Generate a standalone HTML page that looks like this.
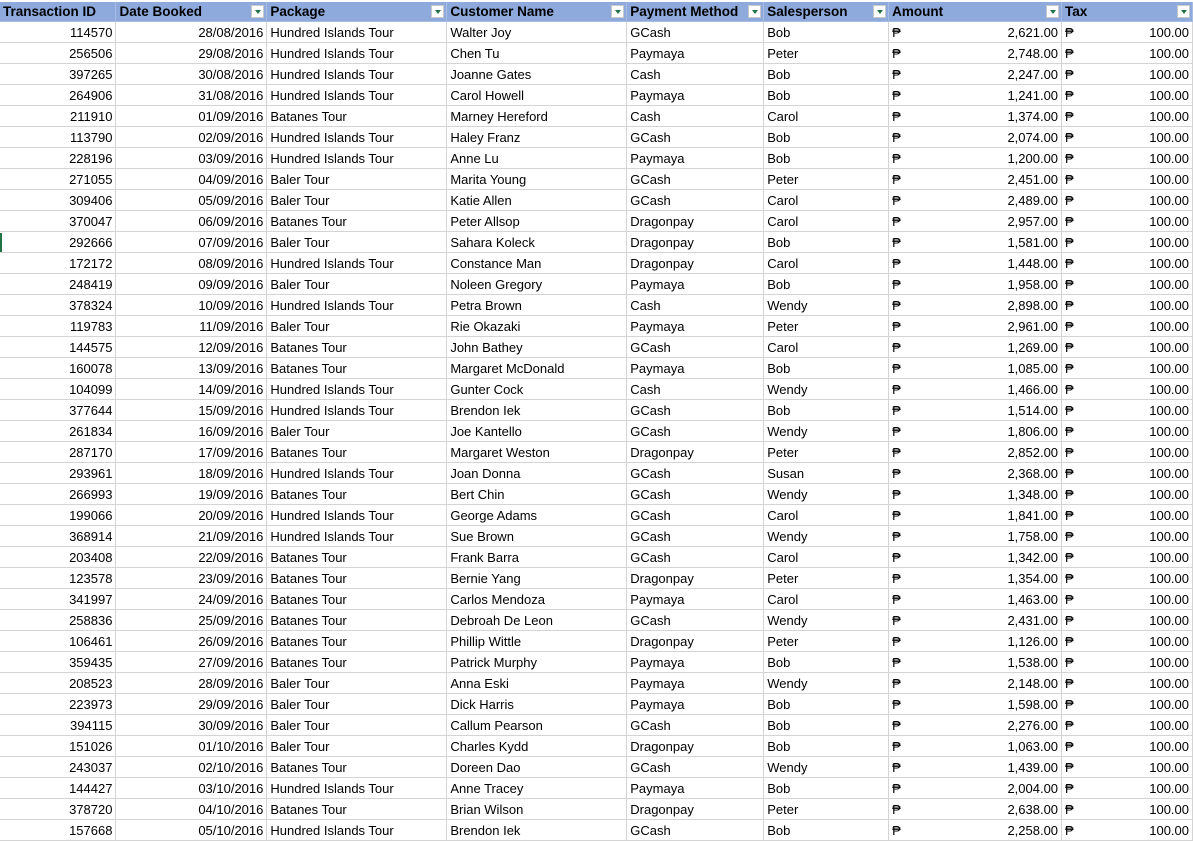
<!DOCTYPE html>
<html><head><meta charset="utf-8"><style>
body{margin:0;background:#fff;width:1193px;height:841px;overflow:hidden;font-family:"Liberation Sans","DejaVu Sans",sans-serif;}
table{border-collapse:collapse;table-layout:fixed;position:absolute;left:0;top:2px;font-size:13px;color:#000;}
td{height:18px;padding:2px 3px 0 3px;border-right:1px solid #d4d4d4;border-bottom:1px solid #d4d4d4;white-space:nowrap;overflow:hidden;line-height:18px;}
tr.h td{background:#8ea9db;font-weight:bold;height:18px;padding-top:1px;line-height:18px;border-right:1px solid #a9bde3;border-bottom:1px solid #a9bde3;position:relative;font-size:13.5px}
.dd{position:absolute;right:2px;top:3px;width:13px;height:13px;background:#fff;border:1px solid #c8c8c8;box-sizing:border-box}
.dd:after{content:"";position:absolute;left:3px;top:4px;border-left:3px solid transparent;border-right:3px solid transparent;border-top:4px solid #217346}
.r{text-align:right}
.p{display:flex;justify-content:space-between}
.mk{position:absolute;left:0;top:233px;width:2px;height:19px;background:#217346}
</style></head><body>
<div class="mk"></div>
<table>
<colgroup><col style="width:116px"><col style="width:151px"><col style="width:180px"><col style="width:180px"><col style="width:137px"><col style="width:125px"><col style="width:173px"><col style="width:131px"></colgroup>
<tr class="h"><td>Transaction ID</td><td>Date Booked<span class="dd"></span></td><td>Package<span class="dd"></span></td><td>Customer Name<span class="dd"></span></td><td>Payment Method<span class="dd"></span></td><td>Salesperson<span class="dd"></span></td><td>Amount<span class="dd"></span></td><td>Tax<span class="dd"></span></td></tr>
<tr><td class="r">114570</td><td class="r">28/08/2016</td><td>Hundred Islands Tour</td><td>Walter Joy</td><td>GCash</td><td>Bob</td><td><div class="p"><span>₱</span><span>2,621.00</span></div></td><td><div class="p"><span>₱</span><span>100.00</span></div></td></tr>
<tr><td class="r">256506</td><td class="r">29/08/2016</td><td>Hundred Islands Tour</td><td>Chen Tu</td><td>Paymaya</td><td>Peter</td><td><div class="p"><span>₱</span><span>2,748.00</span></div></td><td><div class="p"><span>₱</span><span>100.00</span></div></td></tr>
<tr><td class="r">397265</td><td class="r">30/08/2016</td><td>Hundred Islands Tour</td><td>Joanne Gates</td><td>Cash</td><td>Bob</td><td><div class="p"><span>₱</span><span>2,247.00</span></div></td><td><div class="p"><span>₱</span><span>100.00</span></div></td></tr>
<tr><td class="r">264906</td><td class="r">31/08/2016</td><td>Hundred Islands Tour</td><td>Carol Howell</td><td>Paymaya</td><td>Bob</td><td><div class="p"><span>₱</span><span>1,241.00</span></div></td><td><div class="p"><span>₱</span><span>100.00</span></div></td></tr>
<tr><td class="r">211910</td><td class="r">01/09/2016</td><td>Batanes Tour</td><td>Marney Hereford</td><td>Cash</td><td>Carol</td><td><div class="p"><span>₱</span><span>1,374.00</span></div></td><td><div class="p"><span>₱</span><span>100.00</span></div></td></tr>
<tr><td class="r">113790</td><td class="r">02/09/2016</td><td>Hundred Islands Tour</td><td>Haley Franz</td><td>GCash</td><td>Bob</td><td><div class="p"><span>₱</span><span>2,074.00</span></div></td><td><div class="p"><span>₱</span><span>100.00</span></div></td></tr>
<tr><td class="r">228196</td><td class="r">03/09/2016</td><td>Hundred Islands Tour</td><td>Anne Lu</td><td>Paymaya</td><td>Bob</td><td><div class="p"><span>₱</span><span>1,200.00</span></div></td><td><div class="p"><span>₱</span><span>100.00</span></div></td></tr>
<tr><td class="r">271055</td><td class="r">04/09/2016</td><td>Baler Tour</td><td>Marita Young</td><td>GCash</td><td>Peter</td><td><div class="p"><span>₱</span><span>2,451.00</span></div></td><td><div class="p"><span>₱</span><span>100.00</span></div></td></tr>
<tr><td class="r">309406</td><td class="r">05/09/2016</td><td>Baler Tour</td><td>Katie Allen</td><td>GCash</td><td>Carol</td><td><div class="p"><span>₱</span><span>2,489.00</span></div></td><td><div class="p"><span>₱</span><span>100.00</span></div></td></tr>
<tr><td class="r">370047</td><td class="r">06/09/2016</td><td>Batanes Tour</td><td>Peter Allsop</td><td>Dragonpay</td><td>Carol</td><td><div class="p"><span>₱</span><span>2,957.00</span></div></td><td><div class="p"><span>₱</span><span>100.00</span></div></td></tr>
<tr><td class="r">292666</td><td class="r">07/09/2016</td><td>Baler Tour</td><td>Sahara Koleck</td><td>Dragonpay</td><td>Bob</td><td><div class="p"><span>₱</span><span>1,581.00</span></div></td><td><div class="p"><span>₱</span><span>100.00</span></div></td></tr>
<tr><td class="r">172172</td><td class="r">08/09/2016</td><td>Hundred Islands Tour</td><td>Constance Man</td><td>Dragonpay</td><td>Carol</td><td><div class="p"><span>₱</span><span>1,448.00</span></div></td><td><div class="p"><span>₱</span><span>100.00</span></div></td></tr>
<tr><td class="r">248419</td><td class="r">09/09/2016</td><td>Baler Tour</td><td>Noleen Gregory</td><td>Paymaya</td><td>Bob</td><td><div class="p"><span>₱</span><span>1,958.00</span></div></td><td><div class="p"><span>₱</span><span>100.00</span></div></td></tr>
<tr><td class="r">378324</td><td class="r">10/09/2016</td><td>Hundred Islands Tour</td><td>Petra Brown</td><td>Cash</td><td>Wendy</td><td><div class="p"><span>₱</span><span>2,898.00</span></div></td><td><div class="p"><span>₱</span><span>100.00</span></div></td></tr>
<tr><td class="r">119783</td><td class="r">11/09/2016</td><td>Baler Tour</td><td>Rie Okazaki</td><td>Paymaya</td><td>Peter</td><td><div class="p"><span>₱</span><span>2,961.00</span></div></td><td><div class="p"><span>₱</span><span>100.00</span></div></td></tr>
<tr><td class="r">144575</td><td class="r">12/09/2016</td><td>Batanes Tour</td><td>John Bathey</td><td>GCash</td><td>Carol</td><td><div class="p"><span>₱</span><span>1,269.00</span></div></td><td><div class="p"><span>₱</span><span>100.00</span></div></td></tr>
<tr><td class="r">160078</td><td class="r">13/09/2016</td><td>Batanes Tour</td><td>Margaret McDonald</td><td>Paymaya</td><td>Bob</td><td><div class="p"><span>₱</span><span>1,085.00</span></div></td><td><div class="p"><span>₱</span><span>100.00</span></div></td></tr>
<tr><td class="r">104099</td><td class="r">14/09/2016</td><td>Hundred Islands Tour</td><td>Gunter Cock</td><td>Cash</td><td>Wendy</td><td><div class="p"><span>₱</span><span>1,466.00</span></div></td><td><div class="p"><span>₱</span><span>100.00</span></div></td></tr>
<tr><td class="r">377644</td><td class="r">15/09/2016</td><td>Hundred Islands Tour</td><td>Brendon Iek</td><td>GCash</td><td>Bob</td><td><div class="p"><span>₱</span><span>1,514.00</span></div></td><td><div class="p"><span>₱</span><span>100.00</span></div></td></tr>
<tr><td class="r">261834</td><td class="r">16/09/2016</td><td>Baler Tour</td><td>Joe Kantello</td><td>GCash</td><td>Wendy</td><td><div class="p"><span>₱</span><span>1,806.00</span></div></td><td><div class="p"><span>₱</span><span>100.00</span></div></td></tr>
<tr><td class="r">287170</td><td class="r">17/09/2016</td><td>Batanes Tour</td><td>Margaret Weston</td><td>Dragonpay</td><td>Peter</td><td><div class="p"><span>₱</span><span>2,852.00</span></div></td><td><div class="p"><span>₱</span><span>100.00</span></div></td></tr>
<tr><td class="r">293961</td><td class="r">18/09/2016</td><td>Hundred Islands Tour</td><td>Joan Donna</td><td>GCash</td><td>Susan</td><td><div class="p"><span>₱</span><span>2,368.00</span></div></td><td><div class="p"><span>₱</span><span>100.00</span></div></td></tr>
<tr><td class="r">266993</td><td class="r">19/09/2016</td><td>Batanes Tour</td><td>Bert Chin</td><td>GCash</td><td>Wendy</td><td><div class="p"><span>₱</span><span>1,348.00</span></div></td><td><div class="p"><span>₱</span><span>100.00</span></div></td></tr>
<tr><td class="r">199066</td><td class="r">20/09/2016</td><td>Hundred Islands Tour</td><td>George Adams</td><td>GCash</td><td>Carol</td><td><div class="p"><span>₱</span><span>1,841.00</span></div></td><td><div class="p"><span>₱</span><span>100.00</span></div></td></tr>
<tr><td class="r">368914</td><td class="r">21/09/2016</td><td>Hundred Islands Tour</td><td>Sue Brown</td><td>GCash</td><td>Wendy</td><td><div class="p"><span>₱</span><span>1,758.00</span></div></td><td><div class="p"><span>₱</span><span>100.00</span></div></td></tr>
<tr><td class="r">203408</td><td class="r">22/09/2016</td><td>Batanes Tour</td><td>Frank Barra</td><td>GCash</td><td>Carol</td><td><div class="p"><span>₱</span><span>1,342.00</span></div></td><td><div class="p"><span>₱</span><span>100.00</span></div></td></tr>
<tr><td class="r">123578</td><td class="r">23/09/2016</td><td>Batanes Tour</td><td>Bernie Yang</td><td>Dragonpay</td><td>Peter</td><td><div class="p"><span>₱</span><span>1,354.00</span></div></td><td><div class="p"><span>₱</span><span>100.00</span></div></td></tr>
<tr><td class="r">341997</td><td class="r">24/09/2016</td><td>Batanes Tour</td><td>Carlos Mendoza</td><td>Paymaya</td><td>Carol</td><td><div class="p"><span>₱</span><span>1,463.00</span></div></td><td><div class="p"><span>₱</span><span>100.00</span></div></td></tr>
<tr><td class="r">258836</td><td class="r">25/09/2016</td><td>Batanes Tour</td><td>Debroah De Leon</td><td>GCash</td><td>Wendy</td><td><div class="p"><span>₱</span><span>2,431.00</span></div></td><td><div class="p"><span>₱</span><span>100.00</span></div></td></tr>
<tr><td class="r">106461</td><td class="r">26/09/2016</td><td>Batanes Tour</td><td>Phillip Wittle</td><td>Dragonpay</td><td>Peter</td><td><div class="p"><span>₱</span><span>1,126.00</span></div></td><td><div class="p"><span>₱</span><span>100.00</span></div></td></tr>
<tr><td class="r">359435</td><td class="r">27/09/2016</td><td>Batanes Tour</td><td>Patrick Murphy</td><td>Paymaya</td><td>Bob</td><td><div class="p"><span>₱</span><span>1,538.00</span></div></td><td><div class="p"><span>₱</span><span>100.00</span></div></td></tr>
<tr><td class="r">208523</td><td class="r">28/09/2016</td><td>Baler Tour</td><td>Anna Eski</td><td>Paymaya</td><td>Wendy</td><td><div class="p"><span>₱</span><span>2,148.00</span></div></td><td><div class="p"><span>₱</span><span>100.00</span></div></td></tr>
<tr><td class="r">223973</td><td class="r">29/09/2016</td><td>Baler Tour</td><td>Dick Harris</td><td>Paymaya</td><td>Bob</td><td><div class="p"><span>₱</span><span>1,598.00</span></div></td><td><div class="p"><span>₱</span><span>100.00</span></div></td></tr>
<tr><td class="r">394115</td><td class="r">30/09/2016</td><td>Baler Tour</td><td>Callum Pearson</td><td>GCash</td><td>Bob</td><td><div class="p"><span>₱</span><span>2,276.00</span></div></td><td><div class="p"><span>₱</span><span>100.00</span></div></td></tr>
<tr><td class="r">151026</td><td class="r">01/10/2016</td><td>Baler Tour</td><td>Charles Kydd</td><td>Dragonpay</td><td>Bob</td><td><div class="p"><span>₱</span><span>1,063.00</span></div></td><td><div class="p"><span>₱</span><span>100.00</span></div></td></tr>
<tr><td class="r">243037</td><td class="r">02/10/2016</td><td>Batanes Tour</td><td>Doreen Dao</td><td>GCash</td><td>Wendy</td><td><div class="p"><span>₱</span><span>1,439.00</span></div></td><td><div class="p"><span>₱</span><span>100.00</span></div></td></tr>
<tr><td class="r">144427</td><td class="r">03/10/2016</td><td>Hundred Islands Tour</td><td>Anne Tracey</td><td>Paymaya</td><td>Bob</td><td><div class="p"><span>₱</span><span>2,004.00</span></div></td><td><div class="p"><span>₱</span><span>100.00</span></div></td></tr>
<tr><td class="r">378720</td><td class="r">04/10/2016</td><td>Batanes Tour</td><td>Brian Wilson</td><td>Dragonpay</td><td>Peter</td><td><div class="p"><span>₱</span><span>2,638.00</span></div></td><td><div class="p"><span>₱</span><span>100.00</span></div></td></tr>
<tr><td class="r">157668</td><td class="r">05/10/2016</td><td>Hundred Islands Tour</td><td>Brendon Iek</td><td>GCash</td><td>Bob</td><td><div class="p"><span>₱</span><span>2,258.00</span></div></td><td><div class="p"><span>₱</span><span>100.00</span></div></td></tr>
</table>
</body></html>
